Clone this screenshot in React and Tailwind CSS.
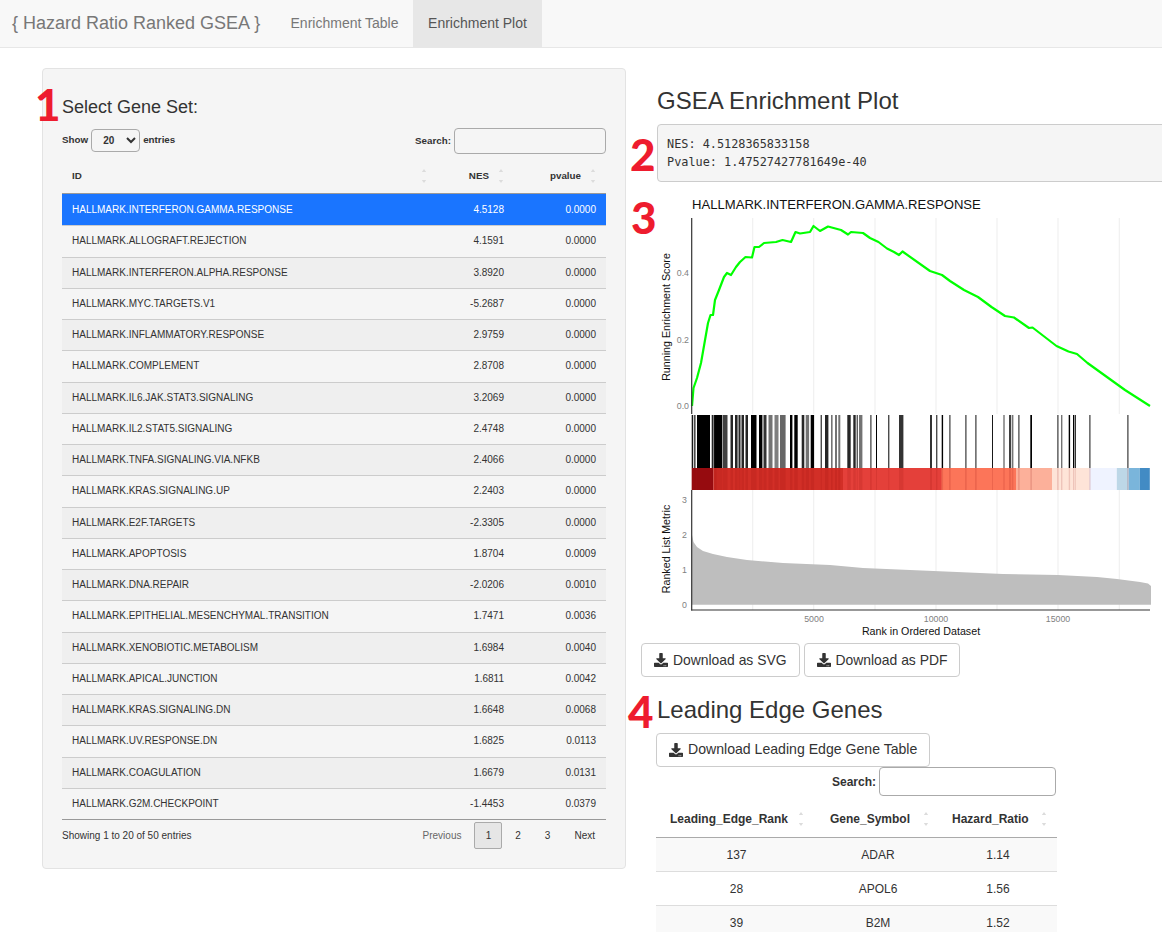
import { FaDownload } from 'react-icons/fa';

const rows = [
  ['HALLMARK.INTERFERON.GAMMA.RESPONSE', '4.5128', '0.0000'],
  ['HALLMARK.ALLOGRAFT.REJECTION', '4.1591', '0.0000'],
  ['HALLMARK.INTERFERON.ALPHA.RESPONSE', '3.8920', '0.0000'],
  ['HALLMARK.MYC.TARGETS.V1', '-5.2687', '0.0000'],
  ['HALLMARK.INFLAMMATORY.RESPONSE', '2.9759', '0.0000'],
  ['HALLMARK.COMPLEMENT', '2.8708', '0.0000'],
  ['HALLMARK.IL6.JAK.STAT3.SIGNALING', '3.2069', '0.0000'],
  ['HALLMARK.IL2.STAT5.SIGNALING', '2.4748', '0.0000'],
  ['HALLMARK.TNFA.SIGNALING.VIA.NFKB', '2.4066', '0.0000'],
  ['HALLMARK.KRAS.SIGNALING.UP', '2.2403', '0.0000'],
  ['HALLMARK.E2F.TARGETS', '-2.3305', '0.0000'],
  ['HALLMARK.APOPTOSIS', '1.8704', '0.0009'],
  ['HALLMARK.DNA.REPAIR', '-2.0206', '0.0010'],
  ['HALLMARK.EPITHELIAL.MESENCHYMAL.TRANSITION', '1.7471', '0.0036'],
  ['HALLMARK.XENOBIOTIC.METABOLISM', '1.6984', '0.0040'],
  ['HALLMARK.APICAL.JUNCTION', '1.6811', '0.0042'],
  ['HALLMARK.KRAS.SIGNALING.DN', '1.6648', '0.0068'],
  ['HALLMARK.UV.RESPONSE.DN', '1.6825', '0.0113'],
  ['HALLMARK.COAGULATION', '1.6679', '0.0131'],
  ['HALLMARK.G2M.CHECKPOINT', '-1.4453', '0.0379'],
];

const genes = [
  ['137', 'ADAR', '1.14'],
  ['28', 'APOL6', '1.56'],
  ['39', 'B2M', '1.52'],
];

// curve traced off the reference, page pixels
const curve = [
  [692, 406], [693.5, 388], [697, 378], [701, 363], [704.5, 343], [708, 323], [710.5, 315], [713, 315], [715, 300],
  [719, 290], [724, 277], [727, 273], [731, 275], [736, 267], [740, 262], [745.5, 257], [752, 257.5], [754.5, 247],
  [759, 247], [764, 243], [776, 242], [782.5, 240], [791, 242], [795.5, 232], [800, 233.5], [810, 232], [813.5, 226],
  [820, 231], [828, 226.5], [841, 230], [848, 234.5], [851, 232], [863, 233], [870, 238], [878.5, 242], [887, 248.5],
  [894, 252], [899, 255], [902.5, 251.5], [930, 271], [942, 275], [950, 281], [964, 290], [978, 297], [991.5, 307],
  [1005, 316], [1014, 317.5], [1029, 328], [1032.5, 327.5], [1056.5, 346], [1068.5, 351.5], [1077, 354], [1087.5, 363],
  [1125, 390], [1150, 406],
];

const metric = [
  [692, 535], [693.5, 542], [697, 547], [703, 551], [713, 554], [727, 557], [747, 560], [783, 563], [830, 565],
  [863, 568], [910, 570], [957, 572], [1003, 574], [1058, 575], [1097, 577], [1117, 579], [1140, 582], [1148, 583.5], [1151, 586],
];

// [x, width, opacity] of the rug marks
const rug = [
  [691.7, 1.5, 0.9], [694, 1.6, 0.7], [697, 13, 1], [711.7, 1.4, 0.85], [713.5, 3, 0.9], [714.5, 7.5, 1], [722.5, 5, 0.75],
  [730.5, 2.5, 0.85], [735, 2.6, 0.85], [738.5, 2, 0.85], [741.5, 2.5, 0.85], [745.5, 2.5, 0.85], [751, 5.5, 1],
  [759, 3.4, 1], [763.5, 3, 0.8], [768.5, 4, 0.55], [774.5, 4, 0.5], [780, 5.6, 0.6], [790, 2.4, 1], [794.3, 3.4, 1],
  [801.7, 2.6, 0.85], [805.7, 3.4, 0.55], [810.7, 3.4, 1], [820.7, 1, 1], [825, 3.4, 0.85], [831, 1.6, 0.55],
  [835, 2, 0.55], [838.3, 2, 0.55], [847.3, 3.4, 0.85], [853.3, 2.4, 0.85], [856.7, 1, 0.9], [859, 3.4, 0.55],
  [870, 1.7, 0.55], [876, 1, 1], [888.3, 1, 1], [899, 4.4, 0.8],
  [930, 2, 0.8], [936, 1.4, 0.7], [941.7, 1.4, 1], [949, 1.7, 0.55], [965, 1.7, 0.55], [975, 1.7, 0.55],
  [992, 1, 0.9], [1003.3, 1.4, 0.55], [1009, 2, 0.75], [1011.7, 1.7, 0.55], [1018, 1.7, 0.55], [1030.3, 1.7, 1],
  [1057, 1.7, 0.55], [1061, 1.4, 0.55], [1068.7, 1.4, 1], [1073, 1.4, 1], [1075, 0.8, 1], [1089, 1.7, 0.55], [1127, 1.7, 0.55],
];

const band = [
  [691.7, 21.6, '#980c11'], [713.3, 130, '#d22f27'], [843, 99, '#e4403a'], [941.5, 74.5, '#fc7559'], [1016, 36, '#fcb09a'],
  [1052, 37.5, '#fee4d8'], [1089.5, 27.3, '#eff3ff'], [1116.8, 12, '#bdd7e7'], [1128.8, 11, '#7ab5db'], [1139.8, 10, '#428bc4'],
];

const gridX = [752.7, 813.7, 875, 936, 997, 1058, 1119.3];

function SortIcon({ className = '' }) {
  return (
    <svg className={className} width="6" height="16" viewBox="0 0 6 16">
      <path d="M3 1 5.2 4H.8Z" fill="#dcdcdc" />
      <path d="M3 15 .8 12h4.4Z" fill="#dcdcdc" />
    </svg>
  );
}

function Plot() {
  const line = curve.map((p) => p.join(',')).join(' ');
  const area = [...metric, [1151, 604.7], [692, 604.7]].map((p) => p.join(',')).join(' ');
  return (
    <svg className="block shrink-0" width="505" height="453" viewBox="657 187 505 453" fontFamily="'Liberation Sans', Arial, sans-serif">
      <text x="692" y="209" fontSize="13.1" fill="#111">HALLMARK.INTERFERON.GAMMA.RESPONSE</text>

      {gridX.map((x) => (
        <g key={x} stroke="#f0f0f0" strokeWidth="1.2">
          <line x1={x} x2={x} y1="218" y2="414" />
          <line x1={x} x2={x} y1="490" y2="610" />
        </g>
      ))}

      <polyline points={line} fill="none" stroke="#00ff00" strokeWidth="2.2" strokeLinejoin="round" />

      {rug.map(([x, w, o]) => (
        <rect key={x} x={x} y="415" width={w} height="53" fill="#000" opacity={o} />
      ))}
      {band.map(([x, w, c]) => (
        <rect key={x} x={x} y="468" width={w} height="22" fill={c} />
      ))}
      {rug.map(([x, w]) => (
        <rect key={x} x={x} y="468" width={w} height="22" fill="#8c0a0a" opacity="0.14" />
      ))}

      <polygon points={area} fill="#bebebe" />

      <g stroke="#333" strokeWidth="1.2">
        <line x1="691.7" x2="691.7" y1="218" y2="414" />
        <line x1="691.7" x2="691.7" y1="490" y2="610.5" />
        <line x1="691.2" x2="1150" y1="610" y2="610" />
      </g>

      <g fontSize="8.8" fill="#7f7f7f" textAnchor="end">
        <text x="689" y="276">0.4</text>
        <text x="689" y="342.5">0.2</text>
        <text x="689" y="409">0.0</text>
        <text x="687" y="503">3</text>
        <text x="687" y="538">2</text>
        <text x="687" y="573">1</text>
        <text x="687" y="608">0</text>
      </g>
      <g fontSize="8.8" fill="#7f7f7f" textAnchor="middle">
        <text x="814" y="622">5000</text>
        <text x="936" y="622">10000</text>
        <text x="1058" y="622">15000</text>
      </g>
      <g fontSize="10.7" fill="#111" textAnchor="middle">
        <text x="921" y="635">Rank in Ordered Dataset</text>
        <text transform="translate(670 317) rotate(-90)">Running Enrichment Score</text>
        <text transform="translate(670 549) rotate(-90)">Ranked List Metric</text>
      </g>
    </svg>
  );
}

function Marker({ className, children }) {
  return (
    <span className={`absolute font-['Lato',sans-serif] font-black text-[44px] leading-none text-[#ee1c2e] ${className}`}>
      {children}
    </span>
  );
}

function DownloadButton({ children, className = '' }) {
  return (
    <button className={`flex h-[34px] items-center gap-[5px] rounded border border-[#ccc] bg-white px-[12px] text-[13.9px] text-[#333] ${className}`}>
      <FaDownload className="text-[14px]" />
      {children}
    </button>
  );
}

export default function App() {
  return (
    <div className="relative h-[932px] w-[1162px] overflow-hidden bg-white font-['Liberation_Sans',Arial,sans-serif] text-[#333]">
      <nav className="flex h-[48px] items-stretch border-b border-[#e7e7e7] bg-[#f8f8f8] text-[#777]">
        <div className="flex w-[276px] items-center pb-[1px] pl-[12px] text-[18px]">{'{ Hazard Ratio Ranked GSEA }'}</div>
        <div className="flex w-[137px] items-center justify-center pb-[1px] text-[14px]">Enrichment Table</div>
        <div className="flex w-[129px] items-center justify-center bg-[#e7e7e7] pb-[1px] text-[14px] text-[#555]">Enrichment Plot</div>
      </nav>

      <div className="flex pl-[42px] pt-[20px]">
        <section className="h-[801px] w-[584px] shrink-0 rounded border border-[#e3e3e3] bg-[#f5f5f5] px-[19px] pt-[26px]">
          <h3 className="text-[18px] leading-[24px]">Select Gene Set:</h3>

          <div className="mt-[9px] flex h-[26px] items-start justify-between">
            <label className="flex h-[23px] items-center gap-[3px] pt-[1px] text-[9.8px] font-bold">
              Show
              <select defaultValue="20" className="h-[23px] w-[49px] rounded border border-[#aaa] bg-transparent pl-[7px] text-[10px] font-bold">
                <option>20</option>
              </select>
              entries
            </label>
            <label className="flex items-center gap-[3px] text-[9.8px] font-bold">
              Search:
              <input className="h-[26px] w-[152px] rounded border border-[#aaa] bg-transparent" />
            </label>
          </div>

          <div className="mt-[1px] grid h-[39px] grid-cols-[1fr_78px_92px] items-center border-b border-[#999] pt-[4px] text-[9.8px] font-bold">
            <div className="flex items-center justify-between pl-[10px] pr-[9px]">ID<SortIcon /></div>
            <div className="flex items-center justify-end gap-[9px] pr-[10px]">NES<SortIcon /></div>
            <div className="flex items-center justify-end gap-[9px] pr-[10px]">pvalue<SortIcon /></div>
          </div>

          {rows.map(([id, nes, p], i) => (
            <div
              key={id}
              className={`grid h-[31.25px] grid-cols-[1fr_78px_92px] items-center text-[10px] ${
                i === 0 ? 'bg-[#1a75ff] text-white' : i % 2 === 0 ? 'border-t border-[#ccc] bg-[#efefef] pb-[1px]' : 'border-t border-[#ccc] pb-[1px]'
              }`}
            >
              <div className="pl-[10px]">{id}</div>
              <div className="pr-[10px] text-right">{nes}</div>
              <div className="pr-[10px] text-right">{p}</div>
            </div>
          ))}

          <div className="flex h-[31px] items-center justify-between border-t border-[#999] text-[10px]">
            <div>Showing 1 to 20 of 50 entries</div>
            <div className="flex items-center">
              <span className="mr-[13px] text-[#666]">Previous</span>
              <span className="flex h-[27px] w-[28px] items-center justify-center rounded-[2px] border border-[#aaa] bg-[#e6e6e6]">1</span>
              <span className="w-[30px] pl-[1px] text-center">2</span>
              <span className="w-[30px] text-center">3</span>
              <span className="pl-[12px] pr-[11px]">Next</span>
            </div>
          </div>
        </section>

        <section className="ml-[31px] w-[520px] shrink-0">
          <h2 className="mt-[20px] text-[24px] leading-[26px]">GSEA Enrichment Plot</h2>
          <pre className="mt-[10px] h-[58px] rounded border border-[#ccc] bg-[#f5f5f5] pl-[9px] pt-[10px] font-['DejaVu_Sans_Mono',monospace] text-[11.85px] leading-[18px] text-[#333]">
            {'NES: 4.5128365833158\nPvalue: 1.47527427781649e-40'}
          </pre>
          <div className="mt-[5px]">
            <Plot />
          </div>
          <div className="-ml-[16px] mt-[3px] flex gap-[4px]">
            <DownloadButton>Download as SVG</DownloadButton>
            <DownloadButton>Download as PDF</DownloadButton>
          </div>

          <h2 className="mt-[20px] text-[24px] leading-[26px]">Leading Edge Genes</h2>
          <DownloadButton className="-ml-[1px] mt-[10px]">
            <span className="text-[14.1px]">Download Leading Edge Gene Table</span>
          </DownloadButton>

          <div className="-ml-[1px] w-[401px]">
            <label className="flex items-center justify-end gap-[3px] pr-[1px] text-[12px] font-bold">
              Search:
              <input className="h-[29px] w-[177px] rounded border border-[#aaa]" />
            </label>
            <div className="mt-[4px] grid h-[38px] grid-cols-[161px_122px_118px] items-center border-b border-[#aaa] text-[12px] font-bold">
              <div className="flex items-center justify-between pl-[14px] pr-[13px]">Leading_Edge_Rank<SortIcon /></div>
              <div className="flex items-center justify-between pl-[13px] pr-[10px]">Gene_Symbol<SortIcon /></div>
              <div className="flex items-center justify-between pl-[13px] pr-[10px]">Hazard_Ratio<SortIcon /></div>
            </div>
            {genes.map(([rank, gene, ratio], i) => (
              <div key={gene} className={`grid h-[34px] grid-cols-[161px_122px_118px] items-center border-b border-[#ddd] text-center text-[12px] ${i % 2 === 0 ? 'bg-[#f9f9f9]' : ''}`}>
                <div>{rank}</div>
                <div>{gene}</div>
                <div>{ratio}</div>
              </div>
            ))}
          </div>
        </section>
      </div>

      <Marker className="left-[35px] top-[82px]">1</Marker>
      <Marker className="left-[630px] top-[132px]">2</Marker>
      <Marker className="left-[631px] top-[195px]">3</Marker>
      <Marker className="left-[628px] top-[689px]">4</Marker>
    </div>
  );
}
